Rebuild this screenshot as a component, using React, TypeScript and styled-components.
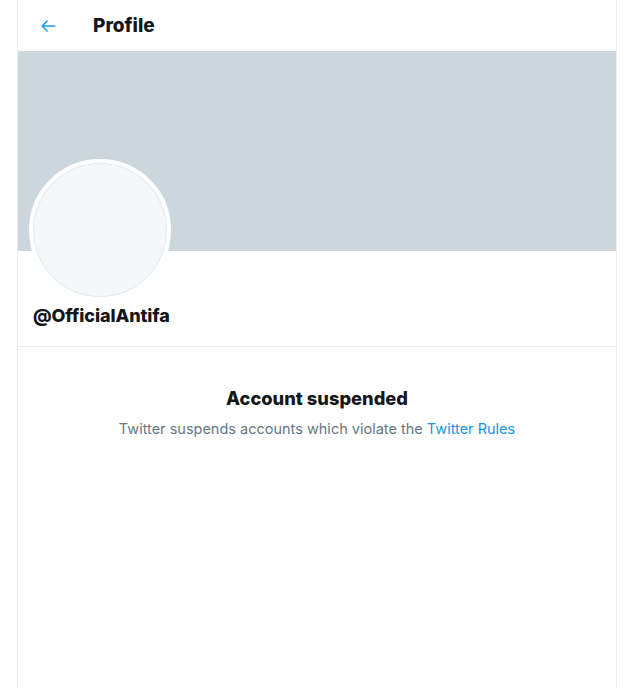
import React from "react";
import styled, { createGlobalStyle } from "styled-components";

const Global = createGlobalStyle`
  html, body { margin: 0; padding: 0; background: #fff; }
  body { font-family: Inter, "Liberation Sans", Arial, sans-serif; -webkit-font-smoothing: antialiased; }
`;

const Column = styled.main`
  box-sizing: border-box;
  width: 600px;
  min-height: 688px;
  margin-left: 17px;
  border-left: 1px solid #e6ecf0;
  border-right: 1px solid #e6ecf0;
  display: flex;
  flex-direction: column;
`;

const Header = styled.header`
  height: 51px;
  display: flex;
  align-items: center;
  padding: 0 15px 0 20px;
  gap: 35px;
  box-sizing: border-box;
`;

const BackButton = styled.button`
  width: 20px;
  height: 20px;
  padding: 0;
  border: 0;
  background: none;
  color: #1da1f2;
  display: flex;
  align-items: center;
  justify-content: center;
`;

const Title = styled.h2`
  margin: 0;
  font-size: 19px;
  font-weight: 800;
  color: #14171a;
`;

const Banner = styled.div`
  height: 200px;
  background: #ccd6dd;
`;

const ProfileInfo = styled.section`
  box-sizing: border-box;
  padding: 0 15px 0 11px;
  height: 96px;
  border-bottom: 1px solid #e6ecf0;
  display: flex;
  flex-direction: column;
  align-items: flex-start;
`;

const Avatar = styled.div`
  width: 134px;
  height: 134px;
  margin-top: -92px;
  border-radius: 50%;
  border: 4px solid #fff;
  background: #f5f8fa;
  box-shadow: inset 0 0 0 1px #e1e8ed;
`;

const Handle = styled.div`
  margin: 3px 0 0 4px;
  font-size: 18px;
  font-weight: 800;
  color: #14171a;
  line-height: 24px;
  letter-spacing: -0.1px;
`;

const Empty = styled.section`
  padding: 38px 20px;
  display: flex;
  flex-direction: column;
  align-items: center;
  gap: 8px;
`;

const EmptyTitle = styled.h3`
  margin: 0;
  font-size: 18.3px;
  font-weight: 800;
  color: #14171a;
  line-height: 26px;
`;

const EmptyText = styled.p`
  margin: 0;
  font-size: 14.5px;
  color: #657786;
  line-height: 20px;
`;

const Link = styled.a`
  color: #1b95e0;
  text-decoration: none;
`;

export default function App() {
  return (
    <>
      <Global />
      <Column>
        <Header>
          <BackButton aria-label="Back">
            <svg width="20" height="20" viewBox="0 0 24 24" fill="currentColor">
              <path d="M20 11H7.414l4.293-4.293c.39-.39.39-1.023 0-1.414s-1.023-.39-1.414 0l-6 6c-.39.39-.39 1.023 0 1.414l6 6c.195.195.45.293.707.293s.512-.098.707-.293c.39-.39.39-1.023 0-1.414L7.414 13H20c.553 0 1-.447 1-1s-.447-1-1-1z" />
            </svg>
          </BackButton>
          <Title>Profile</Title>
        </Header>
        <Banner />
        <ProfileInfo>
          <Avatar />
          <Handle>@OfficialAntifa</Handle>
        </ProfileInfo>
        <Empty>
          <EmptyTitle>Account suspended</EmptyTitle>
          <EmptyText>
            Twitter suspends accounts which violate the <Link href="#">Twitter Rules</Link>
          </EmptyText>
        </Empty>
      </Column>
    </>
  );
}
